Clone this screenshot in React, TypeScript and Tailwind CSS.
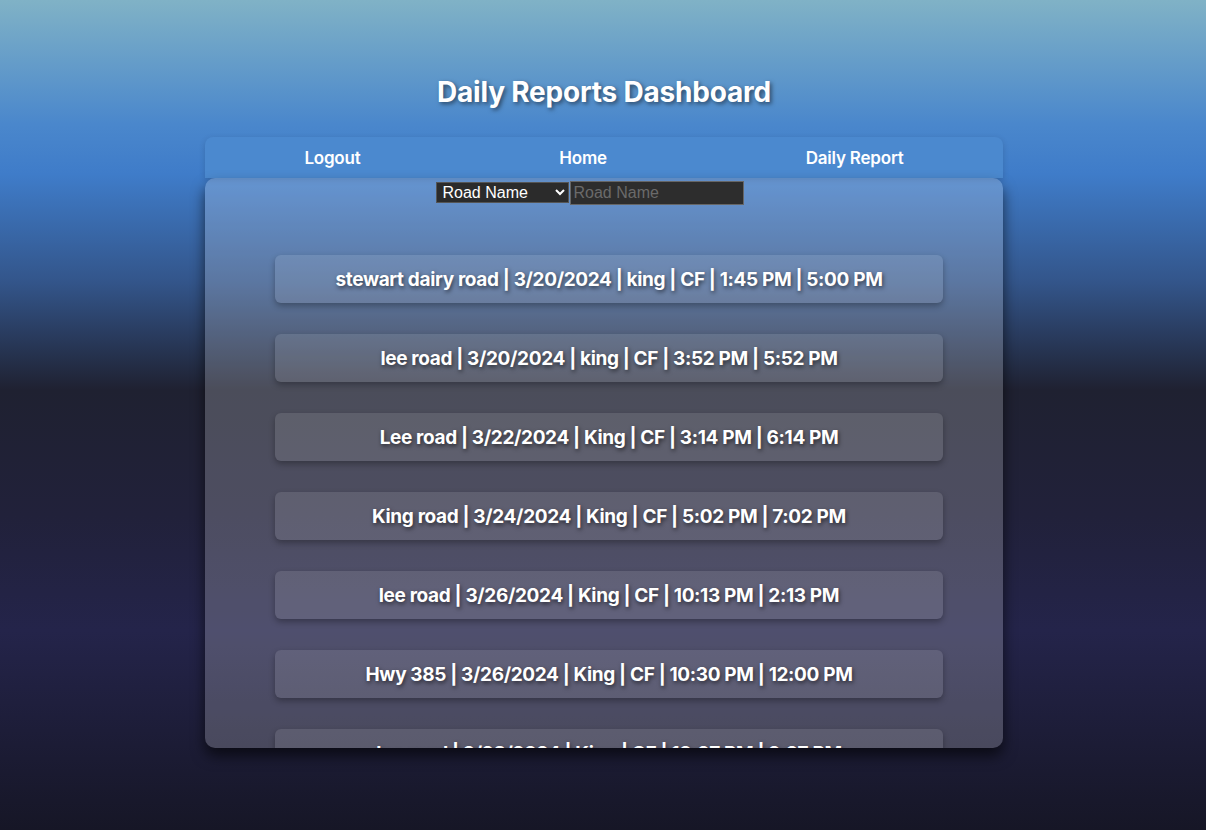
import React from "react";

const reports = [
  "stewart dairy road | 3/20/2024 | king | CF | 1:45 PM | 5:00 PM",
  "lee road | 3/20/2024 | king | CF | 3:52 PM | 5:52 PM",
  "Lee road | 3/22/2024 | King | CF | 3:14 PM | 6:14 PM",
  "King road | 3/24/2024 | King | CF | 5:02 PM | 7:02 PM",
  "lee road | 3/26/2024 | King | CF | 10:13 PM | 2:13 PM",
  "Hwy 385 | 3/26/2024 | King | CF | 10:30 PM | 12:00 PM",
  "lee road | 3/28/2024 | King | CF | 10:27 PM | 2:27 PM",
  "lee road | 3/29/2024 | King | CF | 9:12 PM | 1:12 PM",
];

export default function App() {
  return (
    <div className="min-h-[830px] w-full bg-[linear-gradient(to_bottom,#80b2c6_0%,#4a87cc_15%,#3f7cc9_21%,#33558a_34%,#1f2131_47%,#21213a_62%,#24244a_76%,#1d1d38_88%,#161626_100%)] font-['Inter','Liberation_Sans',sans-serif] text-white">
      <div className="flex flex-col items-center pl-[2px] pt-[73px]">
        <h1 className="text-[28px] font-bold leading-[38px] tracking-[-0.2px] [text-shadow:2px_2px_4px_rgba(0,0,0,0.5)]">
          Daily Reports Dashboard
        </h1>
        <div className="mt-[26px] w-[798px]">
          <nav className="flex h-[41px] items-center justify-around rounded-t-[8px] bg-[#4b89cf] pt-[2px] text-[17px] font-semibold tracking-[-0.2px] shadow-[0_2px_6px_rgba(0,0,0,0.15)]">
            <span>Logout</span>
            <span>Home</span>
            <span>Daily Report</span>
          </nav>
          <div className="h-[570px] overflow-hidden rounded-[10px] bg-white/20 shadow-[0_8px_14px_rgba(0,0,0,0.6)]">
            <div className="flex items-start justify-center gap-px pr-[29px] pt-[3px]">
              <select className="mt-[1px] h-[21px] w-[133px] border border-[#555] bg-[#2b2b2b] px-[2px] font-['Liberation_Sans',sans-serif] text-[16px] leading-[19px] text-white outline-none">
                <option>Road Name</option>
              </select>
              <input
                placeholder="Road Name"
                className="h-[24px] w-[174px] border border-[#666] bg-[#2d2d2d] px-[3px] font-['Liberation_Sans',sans-serif] text-[16px] text-white outline-none placeholder:text-[#6a6a6a]"
              />
            </div>
            <div className="ml-[70px] mt-[50px] flex w-[668px] flex-col gap-[31px]">
              {reports.map((r, i) => (
                <div
                  key={i}
                  className="flex h-[48px] shrink-0 items-center justify-center rounded-[6px] bg-white/10 pt-[2px] text-[19px] font-bold tracking-[-0.35px] shadow-[0_3px_6px_rgba(0,0,0,0.3)] [text-shadow:1px_2px_4px_rgba(0,0,0,0.6)]"
                >
                  {r}
                </div>
              ))}
            </div>
          </div>
        </div>
      </div>
    </div>
  );
}
